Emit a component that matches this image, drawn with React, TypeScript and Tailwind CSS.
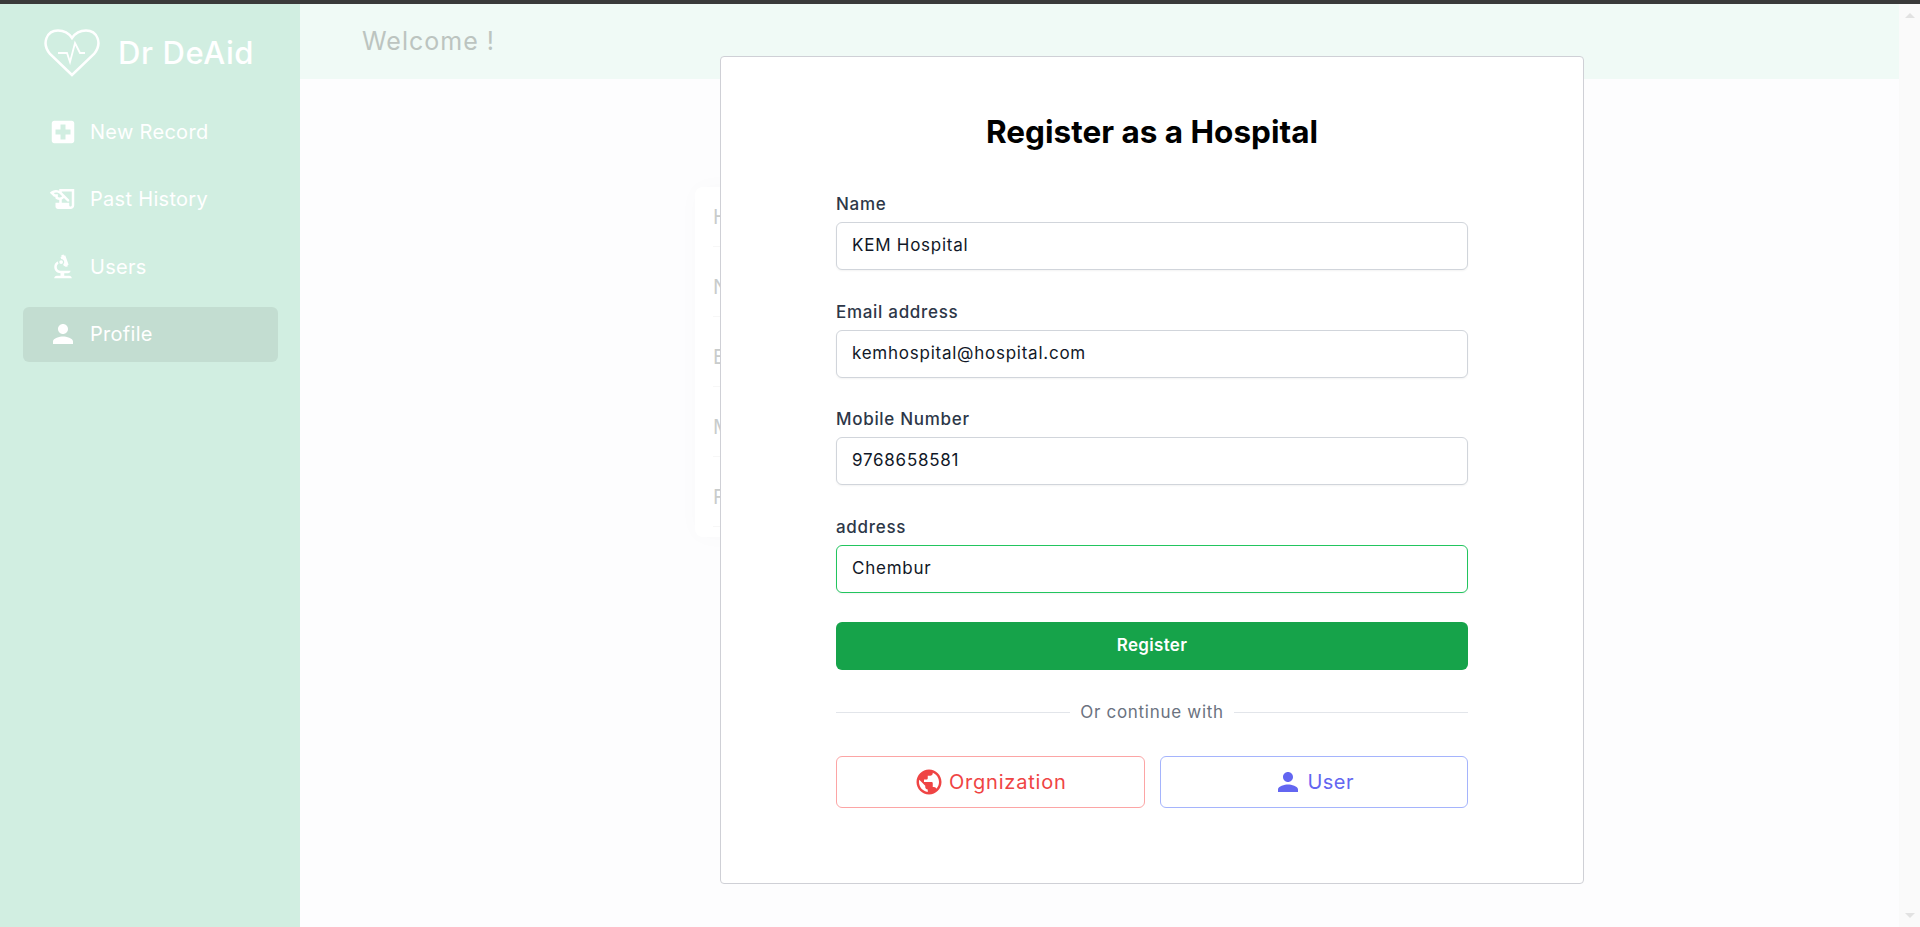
import { MdBiotech, MdHistoryEdu, MdLocalHospital, MdPerson, MdPublic } from "react-icons/md";

const NAV = [
  { label: "New Record", icon: MdLocalHospital },
  { label: "Past History", icon: MdHistoryEdu },
  { label: "Users", icon: MdBiotech },
  { label: "Profile", icon: MdPerson, active: true },
];

const BEHIND = ["H", "N", "E", "M", "F"];

const FIELDS = [
  { label: "Name", value: "KEM Hospital" },
  { label: "Email address", value: "kemhospital@hospital.com" },
  { label: "Mobile Number", value: "9768658581" },
  { label: "address", value: "Chembur", focused: true },
];

function HeartLogo() {
  return (
    <svg viewBox="0 0 58 48" className="h-[48px] w-[58px]" fill="none" stroke="#fff" strokeWidth="2.500">
      <path d="M29 46 7 25C-2 14 4 1.500 15 1.500c6 0 11 3 14 7.500 3-4.500 8-7.500 14-7.500 11 0 17 12.500 8 23.500z" />
      <path d="M15 24h9l3 9 5-19 5 10h5" strokeWidth="1.800" />
    </svg>
  );
}

export default function App() {
  return (
    <div className="relative flex h-[927px] flex-col overflow-hidden bg-[#fdfdfe] [font-family:Inter,sans-serif]">
      <div className="h-[4px] bg-[#3a3a3a]" />
      <div className="flex flex-1">
        <aside className="flex w-[300px] flex-col bg-[#d1eee1] pr-[22px] pl-[23px]">
          <div className="flex items-center gap-[17px] pt-[25px] pb-[24px] pl-[20px]">
            <HeartLogo />
            <span className="text-[31px] leading-[40px] font-medium tracking-[0.6px] text-white">Dr DeAid</span>
          </div>
          <nav className="flex flex-col gap-[12.500px] pt-[3px]">
            {NAV.map((item) => (
              <div
                key={item.label}
                className={`flex h-[55px] items-center gap-[12px] rounded-md pl-[25px] text-[20px] tracking-[0.3px] text-white ${
                  item.active ? "bg-[#c3ddd1]" : ""
                }`}
              >
                <item.icon className="h-[30px] w-[30px]" />
                {item.label}
              </div>
            ))}
          </nav>
        </aside>

        <main className="flex min-w-0 flex-1 flex-col">
          <header className="flex h-[75px] items-center bg-[#f0faf6] pl-[62px] text-[25px] tracking-[1px] text-[#bcc4c0]">
            Welcome !
          </header>
          <div className="mt-[108px] ml-[395px] flex h-[350px] w-[600px] flex-col gap-[10px] rounded-lg bg-white pl-[18px] shadow-[0_0_24px_rgba(0,0,0,0.02)]">
            {BEHIND.map((c) => (
              <div key={c} className="flex h-[60px] items-center border-b border-[#f7f7f7] text-[20px] text-[#c9cccc]">
                {c}
              </div>
            ))}
          </div>
        </main>

        <div className="flex w-[21px] flex-col items-center justify-between bg-[#fafafa] py-[9px]">
          <div className="h-0 w-0 border-x-[5px] border-b-[5px] border-x-transparent border-b-[#e2e2e2]" />
          <div className="h-0 w-0 border-x-[5px] border-t-[5px] border-x-transparent border-t-[#e2e2e2]" />
        </div>
      </div>

      {/* modal sits over the page */}
      <div className="absolute top-[56px] left-[720px] flex h-[828px] w-[864px] flex-col rounded-[4px] border border-[#cfd0d6] bg-white px-[115px]">
        <h1 className="mt-[53px] text-center text-[31.500px] leading-[44px] font-bold text-black">
          Register as a Hospital
        </h1>
        <form className="mt-[38px] flex flex-col gap-[29.500px]">
          {FIELDS.map((f) => (
            <div key={f.label}>
              <label className="block text-[17px] leading-[24px] font-medium tracking-[0.7px] text-[#2d3748]">
                {f.label}
              </label>
              <div
                className={`mt-[6px] flex h-[48px] items-center rounded-md border bg-white px-[15px] text-[17px] tracking-[0.75px] text-[#111827] shadow-[0_1px_2px_rgba(0,0,0,0.05)] ${
                  f.focused ? "border-[#22c55e]" : "border-[#d1d5db]"
                }`}
              >
                {f.value}
              </div>
            </div>
          ))}
          <button type="button" className="h-[48px] rounded-md bg-[#16a34a] text-[17px] font-semibold tracking-[0.3px] text-white">
            Register
          </button>
        </form>
        <div className="mt-[30px] flex items-center gap-[10px]">
          <div className="h-px flex-1 bg-[#e2e5ea]" />
          <span className="text-[17px] leading-[24px] tracking-[0.7px] text-[#6b7280]">Or continue with</span>
          <div className="h-px flex-1 bg-[#e2e5ea]" />
        </div>
        <div className="mt-[32px] grid grid-cols-2 gap-[15px]">
          <button type="button" className="flex h-[52px] items-center justify-center gap-[5px] rounded-md border border-[#fca5a5] text-[20px] tracking-[0.8px] text-[#ef4444]">
            <MdPublic className="h-[30px] w-[30px]" />
            Orgnization
          </button>
          <button type="button" className="flex h-[52px] items-center justify-center gap-[4px] rounded-md border border-[#a5b4fc] text-[20px] tracking-[0.5px] text-[#6366f1]">
            <MdPerson className="h-[30px] w-[30px]" />
            User
          </button>
        </div>
      </div>
    </div>
  );
}
